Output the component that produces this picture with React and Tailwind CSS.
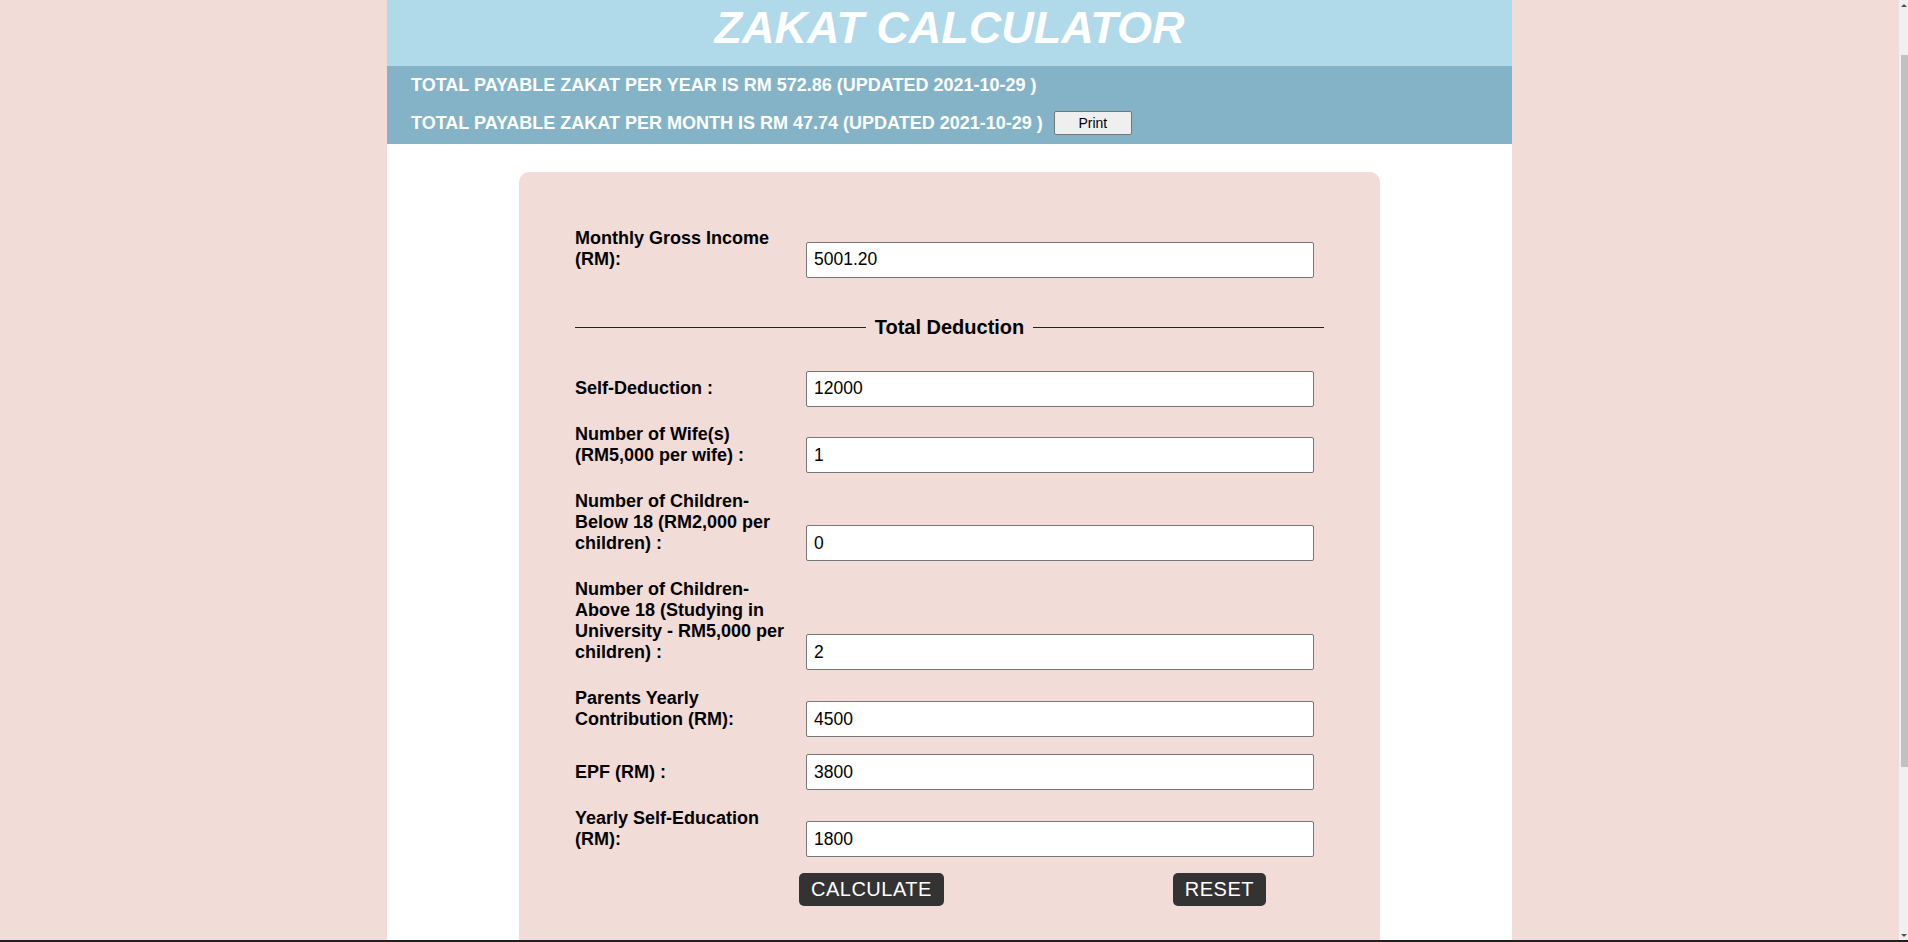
import React from 'react';

const deductions = [
  { label: 'Self-Deduction :', value: '12000' },
  { label: 'Number of Wife(s) (RM5,000 per wife) :', value: '1' },
  { label: 'Number of Children-Below 18 (RM2,000 per children) :', value: '0' },
  { label: 'Number of Children-Above 18 (Studying in University - RM5,000 per children) :', value: '2' },
  { label: 'Parents Yearly Contribution (RM):', value: '4500' },
  { label: 'EPF (RM) :', value: '3800' },
  { label: 'Yearly Self-Education (RM):', value: '1800' },
];

function Field({ label, value }) {
  return (
    <div className="text-[18px] leading-[normal]">
      <label className="inline-block w-[215px] align-baseline font-bold text-black">{label}</label>
      <input
        type="text"
        defaultValue={value}
        className="ml-[16px] h-[36px] w-[508px] rounded-[2px] border border-[#767676] bg-white pl-[7px] align-baseline text-[17.5px] text-black outline-none"
      />
    </div>
  );
}

function Scrollbar() {
  return (
    <div className="flex w-[9px] flex-col bg-[#f0f0f0]">
      <div className="flex h-[10px] items-center justify-center">
        <div className="h-0 w-0 border-x-[3px] border-b-[3px] border-x-transparent border-b-[#505050]" />
      </div>
      <div className="ml-[2px] mt-[45px] h-[712px] bg-[#c1c1c1]" />
      <div className="flex-1" />
      <div className="flex h-[10px] items-center justify-center">
        <div className="h-0 w-0 border-x-[3px] border-t-[3px] border-x-transparent border-t-[#505050]" />
      </div>
    </div>
  );
}

export default function App() {
  return (
    <div className="flex h-[942px] flex-col overflow-hidden font-['Liberation_Sans',Arial,sans-serif]">
      <div className="flex min-h-0 flex-1">
        <div className="min-w-0 flex-1 overflow-hidden bg-[#f2dcd7]">
          <div className="mx-auto flex min-h-full w-[1125px] flex-col bg-white">
            <div className="h-[66px] bg-[#b0d9e9] pt-[2px] text-center text-[45px] font-bold italic leading-[51px] text-white">
              ZAKAT CALCULATOR
            </div>
            <div className="bg-[#84b3c7] pb-[2px] pl-[24px] text-[18px] font-bold text-white">
              <div className="flex h-[38px] items-center">
                TOTAL PAYABLE ZAKAT PER YEAR IS RM 572.86 (UPDATED 2021-10-29 )
              </div>
              <div className="flex h-[38px] items-center">
                <span>TOTAL PAYABLE ZAKAT PER MONTH IS RM 47.74 (UPDATED 2021-10-29 )</span>
                <button className="ml-[11px] h-[24px] w-[78px] rounded-[2px] border border-[#767676] bg-[#efefef] text-[14px] font-normal text-black">
                  Print
                </button>
              </div>
            </div>

            <div className="mx-auto mt-[28px] w-[861px] flex-1 rounded-t-[10px] bg-[#f2dcd7] p-[56px]">
              <Field label="Monthly Gross Income (RM):" value="5001.20" />

              <div className="mt-[38px] flex items-center gap-[9px]">
                <div className="h-px flex-1 bg-[#222]" />
                <span className="text-[20px] font-bold leading-[23px] text-black">Total Deduction</span>
                <div className="h-px flex-1 bg-[#222]" />
              </div>

              <div className="mt-[32px] flex flex-col gap-[17.4px]">
                {deductions.map((d) => (
                  <Field key={d.label} label={d.label} value={d.value} />
                ))}
              </div>

              <div className="mt-[16px] flex">
                <button className="ml-[224px] h-[33px] rounded-[5px] bg-[#333] px-[12px] text-[20px] leading-[23px] tracking-[0.5px] text-white">
                  CALCULATE
                </button>
                <button className="ml-[229px] h-[33px] rounded-[5px] bg-[#333] px-[12px] text-[20px] leading-[23px] tracking-[0.5px] text-white">
                  RESET
                </button>
              </div>
            </div>
          </div>
        </div>
        <Scrollbar />
      </div>
      <div className="h-[2px] bg-[#1f1f1f]" />
    </div>
  );
}
